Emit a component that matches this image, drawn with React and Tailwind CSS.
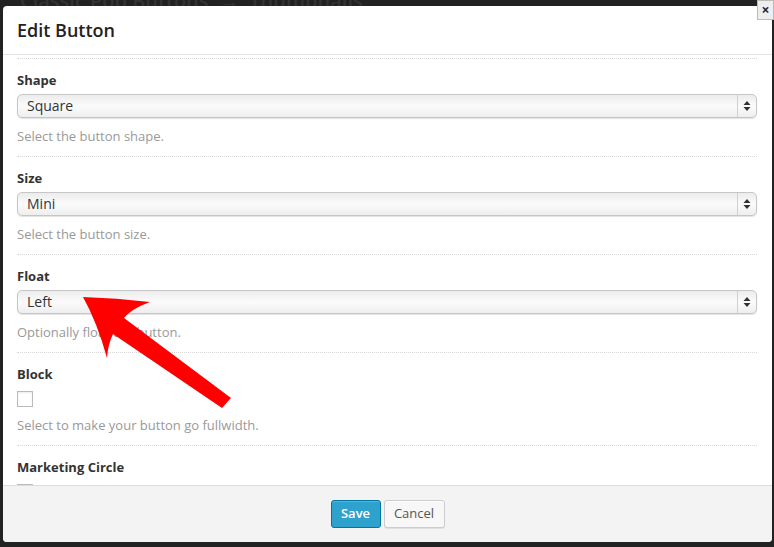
import React from "react";

function Arrows() {
  return (
    <svg width="8" height="12" viewBox="0 0 8 12" className="block">
      <path d="M4 1 L7.5 5 L0.5 5 Z" fill="#333" />
      <path d="M4 11 L7.5 7 L0.5 7 Z" fill="#333" />
    </svg>
  );
}

function SelectBox({ value }) {
  return (
    <div className="flex h-[24px] items-stretch rounded-[5px] border border-[#c6c6c6] bg-gradient-to-b from-[#ececec] via-[#fbfbfb] to-[#eeeeee] shadow-[0_1px_1px_rgba(0,0,0,0.12)]">
      <div className="flex flex-1 items-center pl-[9px] text-[14px] leading-none text-[#333]">{value}</div>
      <div className="flex w-[19px] items-center justify-center border-l border-[#d0d0d0]">
        <Arrows />
      </div>
    </div>
  );
}

function Section({ label, children, help }) {
  return (
    <div className="border-t border-dotted border-[#d8d8d8] pt-[12px] pb-[11px]">
      <div className="h-[18px] text-[13px] font-bold leading-[18px] text-[#333]">{label}</div>
      {children}
      {help && <div className="mt-[9px] h-[18px] text-[13px] leading-[18px] text-[#999]">{help}</div>}
    </div>
  );
}

function Checkbox() {
  return <div className="h-[16px] w-[16px] border border-[#bbb] bg-white shadow-[inset_0_1px_2px_rgba(0,0,0,0.08)]" />;
}

export default function App() {
  return (
    <div className="relative h-[547px] w-[774px] overflow-hidden bg-[#222] font-['Open_Sans',sans-serif]">
      <div className="h-[6px] overflow-hidden pl-[20px]">
        <div className="-mt-[14px] whitespace-nowrap text-[20px] font-semibold text-[#333]">
          Classic Pop Buttons&nbsp;&nbsp;→&nbsp;&nbsp;Thumbnails
        </div>
      </div>
      <div className="ml-[3px] flex h-[536px] w-[769px] flex-col overflow-hidden rounded-[4px] bg-white">
        <div className="flex h-[49px] shrink-0 items-center border-b border-[#e2e2e2] pl-[14px] text-[18px] font-semibold text-[#222]">
          Edit Button
        </div>
        <div className="min-h-0 flex-1 overflow-hidden pl-[14px] pr-[15px] pt-[3px]">
          <Section label="Shape" help="Select the button shape.">
            <div className="mt-[5px]"><SelectBox value="Square" /></div>
          </Section>
          <Section label="Size" help="Select the button size.">
            <div className="mt-[5px]"><SelectBox value="Mini" /></div>
          </Section>
          <Section label="Float" help="Optionally float the button.">
            <div className="mt-[5px]"><SelectBox value="Left" /></div>
          </Section>
          <Section label="Block" help="Select to make your button go fullwidth.">
            <div className="mt-[8px]"><Checkbox /></div>
          </Section>
          <Section label="Marketing Circle">
            <div className="mt-[8px]"><Checkbox /></div>
          </Section>
        </div>
        <div className="flex h-[57px] shrink-0 items-center justify-center gap-[3px] border-t border-[#dddddd] bg-[#f3f3f3]">
          <button className="h-[28px] w-[50px] rounded-[3px] border border-[#0074a2] bg-[#2ea2cc] text-[13px] font-semibold text-white shadow-[inset_0_1px_0_rgba(120,200,230,0.5)]">
            Save
          </button>
          <button className="h-[28px] w-[61px] rounded-[3px] border border-[#ccc] bg-[#f7f7f7] text-[13px] text-[#555] shadow-[inset_0_1px_0_#fff,0_1px_0_rgba(0,0,0,0.08)]">
            Cancel
          </button>
        </div>
      </div>
      <div className="absolute right-0 top-0 flex h-[20px] w-[17px] items-center justify-center border border-[#bbb] bg-[#eeeeee] text-[14px] font-bold leading-none text-[#1b2a3a]">
        ×
      </div>
      <svg className="pointer-events-none absolute left-0 top-0" width="774" height="547" viewBox="0 0 774 547">
        <path
          d="M83 297 Q117 298 150 302 Q131 309 124 318 L231 398 L222 408 L113 334 Q108 344 107 358 Q97 322 83 297 Z"
          fill="#ff0000"
        />
      </svg>
    </div>
  );
}
